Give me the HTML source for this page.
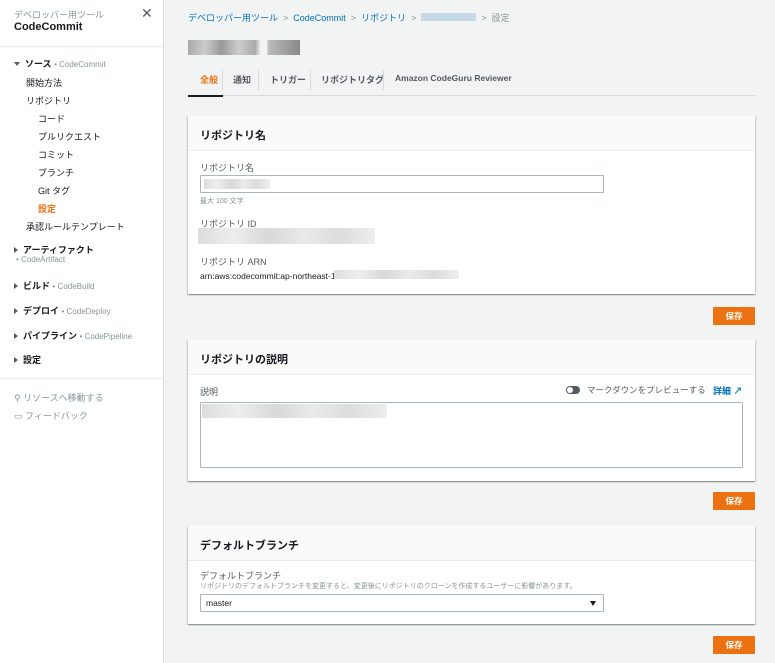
<!DOCTYPE html>
<html><head><meta charset="utf-8"><style>
*{margin:0;padding:0;box-sizing:border-box}
body{width:775px;height:663px;overflow:hidden;background:#f2f3f3;font-family:"Liberation Sans","Noto Sans CJK JP",sans-serif;color:#16191f;position:relative;font-size:9px}
.a{position:absolute;white-space:nowrap}
#side{position:absolute;left:0;top:0;width:164px;height:663px;background:#fff;border-right:1px solid #d5dbdb}
.hr{position:absolute;left:0;width:164px;height:1px;background:#e9ebed}
.g{color:#879596}
.b{font-weight:bold}
.tri{display:inline-block;width:0;height:0;border-left:4px solid #545b64;border-top:3px solid transparent;border-bottom:3px solid transparent;margin-right:5px}
.trid{display:inline-block;width:0;height:0;border-top:4px solid #545b64;border-left:3px solid transparent;border-right:3px solid transparent;margin-right:5px;vertical-align:1px}
.panel{position:absolute;left:188px;width:567px;background:#fff;box-shadow:0 1px 1px rgba(0,28,36,.3),1px 1px 1px rgba(0,28,36,.15),-1px 1px 1px rgba(0,28,36,.15)}
.ph{height:35px;background:#fafafa;border-bottom:1px solid #eaeded;padding:11px 12px;font-size:11px;font-weight:bold}
.btn{position:absolute;left:713px;width:42px;height:18px;background:#ec7211;color:#fff;font-weight:bold;font-size:8.5px;text-align:center;line-height:18px;border-radius:1px}
.blur{position:absolute;background:linear-gradient(90deg,#ddd,#eee 20%,#d8d8d8 40%,#eaeaea 60%,#dcdcdc 80%,#eee)}
.in{position:absolute;border:1px solid #aab7b8;background:#fff;border-radius:1px}
.bc{color:#0073bb}
.sep{color:#879596;margin:0 5px}
.ts{position:absolute;top:70px;width:1px;height:20px;background:#d5dbdb}
</style></head><body>
<div id="side">
<div class="a g" style="left:14px;top:8px;font-size:9px">デベロッパー用ツール</div>
<div class="a b" style="left:14px;top:21px;font-size:11px">CodeCommit</div>
<div class="a" style="left:141px;top:5px;font-size:14px;color:#545b64">✕</div>
<div class="hr" style="top:46px"></div>
<div class="a b" style="left:14px;top:57px"><span class="trid"></span>ソース <span class="g" style="font-weight:normal;font-size:8px">• CodeCommit</span></div>
<div class="a" style="left:26px;top:76px">開始方法</div>
<div class="a" style="left:26px;top:94px">リポジトリ</div>
<div class="a" style="left:38px;top:112px">コード</div>
<div class="a" style="left:38px;top:130px">プルリクエスト</div>
<div class="a" style="left:38px;top:148px">コミット</div>
<div class="a" style="left:38px;top:166px">ブランチ</div>
<div class="a" style="left:38px;top:184px">Git タグ</div>
<div class="a b" style="left:38px;top:202px;color:#ec7211">設定</div>
<div class="a" style="left:26px;top:220px">承認ルールテンプレート</div>
<div class="a b" style="left:14px;top:243px"><span class="tri"></span>アーティファクト</div>
<div class="a g" style="left:16px;top:255px;font-size:8px">• CodeArtifact</div>
<div class="a b" style="left:14px;top:279px"><span class="tri"></span>ビルド <span class="g" style="font-weight:normal;font-size:8px">• CodeBuild</span></div>
<div class="a b" style="left:14px;top:304px"><span class="tri"></span>デプロイ <span class="g" style="font-weight:normal;font-size:8px">• CodeDeploy</span></div>
<div class="a b" style="left:14px;top:329px"><span class="tri"></span>パイプライン <span class="g" style="font-weight:normal;font-size:8px">• CodePipeline</span></div>
<div class="a b" style="left:14px;top:353px"><span class="tri"></span>設定</div>
<div class="hr" style="top:378px"></div>
<div class="a g" style="left:14px;top:391px">⚲ リソースへ移動する</div>
<div class="a g" style="left:14px;top:409px">▭ フィードバック</div>
</div>

<div class="a" style="left:188px;top:11px;font-size:9px"><span class="bc">デベロッパー用ツール</span><span class="sep">&gt;</span><span class="bc">CodeCommit</span><span class="sep">&gt;</span><span class="bc">リポジトリ</span><span class="sep">&gt;</span><span style="display:inline-block;width:55px;height:8px;background:#c5d9e8"></span><span class="sep">&gt;</span><span class="g">設定</span></div>
<div class="blur" style="left:188px;top:40px;width:112px;height:15px;background:linear-gradient(90deg,#aaa,#ccc 15%,#999 30%,#ccc 45%,#aaa 60%,#f2f3f3 65%,#f2f3f3 70%,#bbb 72%,#888)"></div>

<div class="a b" style="left:200px;top:73px;color:#ec7211">全般</div>
<div class="ts" style="left:222px"></div>
<div class="a b" style="left:233px;top:73px;color:#545b64">通知</div>
<div class="ts" style="left:258px"></div>
<div class="a b" style="left:270px;top:73px;color:#545b64">トリガー</div>
<div class="ts" style="left:310px"></div>
<div class="a b" style="left:321px;top:73px;color:#545b64">リポジトリタグ</div>
<div class="ts" style="left:383px"></div>
<div class="a b" style="left:395px;top:73px;color:#545b64;font-size:8.5px">Amazon CodeGuru Reviewer</div>
<div class="a" style="left:188px;top:95px;width:567px;height:1px;background:#d5dbdb"></div>
<div class="a" style="left:188px;top:95px;width:35px;height:2px;background:#16191f"></div>

<div class="panel" style="top:116px;height:178px">
<div class="ph">リポジトリ名</div>
<div class="a" style="left:12px;top:45px;color:#545b64">リポジトリ名</div>
<div class="in" style="left:12px;top:59px;width:404px;height:18px"></div>
<div class="blur" style="left:16px;top:63px;width:66px;height:10px"></div>
<div class="a g" style="left:12px;top:80px;font-size:7px">最大 100 文字</div>
<div class="a" style="left:12px;top:101px;color:#545b64">リポジトリ ID</div>
<div class="blur" style="left:10px;top:112px;width:177px;height:16px"></div>
<div class="a" style="left:12px;top:139px;color:#545b64">リポジトリ ARN</div>
<div class="a" style="left:12px;top:155px;font-size:8.5px">arn:aws:codecommit:ap-northeast-1</div>
<div class="blur" style="left:146px;top:154px;width:125px;height:9px"></div>
</div>
<div class="btn" style="top:307px">保存</div>

<div class="panel" style="top:340px;height:141px">
<div class="ph">リポジトリの説明</div>
<div class="a" style="left:12px;top:45px;color:#545b64">説明</div>
<div class="a" style="left:378px;top:46px;width:14px;height:8px;border-radius:4px;background:#545b64"><div style="position:absolute;left:1px;top:1px;width:6px;height:6px;border-radius:3px;background:#fff"></div></div>
<div class="a" style="left:399px;top:44px;color:#545b64;font-size:8.5px">マークダウンをプレビューする</div>
<div class="a b" style="left:525px;top:44px;color:#0073bb">詳細 ↗</div>
<div class="in" style="left:12px;top:62px;width:543px;height:66px"></div>
<div class="blur" style="left:14px;top:64px;width:185px;height:14px"></div>
</div>
<div class="btn" style="top:492px">保存</div>

<div class="panel" style="top:526px;height:98px">
<div class="ph">デフォルトブランチ</div>
<div class="a" style="left:12px;top:43px;color:#545b64">デフォルトブランチ</div>
<div class="a g" style="left:12px;top:55px;font-size:7px">リポジトリのデフォルトブランチを変更すると、変更後にリポジトリのクローンを作成するユーザーに影響があります。</div>
<div class="in" style="left:12px;top:68px;width:404px;height:18px"></div>
<div class="a" style="left:18px;top:72px;font-size:8.5px">master</div>
<div class="a" style="left:402px;top:75px;border-top:5px solid #16191f;border-left:3.5px solid transparent;border-right:3.5px solid transparent"></div>
</div>
<div class="btn" style="top:636px">保存</div>
</body></html>
